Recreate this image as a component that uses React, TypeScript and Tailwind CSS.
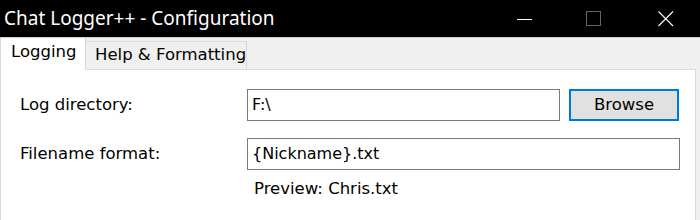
import React from "react";

const uiFont = { fontFamily: "Tahoma, 'DejaVu Sans', sans-serif" };

const TitleBar = () => (
  <div className="flex h-[38px] items-center bg-black border-b border-[#cfcfcf] text-white">
    <div
      className="pl-[4px] text-[19px] leading-none"
      style={{ fontFamily: "'Noto Sans', 'Open Sans', sans-serif" }}
    >
      Chat Logger++ - Configuration
    </div>
    <div className="ml-auto flex h-full items-center">
      <svg width="16" height="16" viewBox="0 0 16 16" className="mr-[53px]">
        <line x1="0" y1="8.5" x2="15" y2="8.5" stroke="#fff" strokeWidth="1" />
      </svg>
      <svg width="16" height="16" viewBox="0 0 16 16" className="mr-[56px]">
        <rect x="0.5" y="0.5" width="14" height="14" fill="none" stroke="#666" strokeWidth="1" />
      </svg>
      <svg width="16" height="16" viewBox="0 0 16 16" className="mr-[26px]">
        <path d="M0.5 0.5 L15 15 M15 0.5 L0.5 15" stroke="#fff" strokeWidth="1.1" />
      </svg>
    </div>
  </div>
);

const Tabs = () => (
  <div
    className="flex h-[31px] items-end whitespace-nowrap bg-[#f0f0f0] text-[16.5px] text-black"
    style={uiFont}
  >
    <div className="relative z-10 -mb-px flex h-[32px] w-[86px] shrink-0 items-center border-l border-r border-[#d9d9d9] bg-white pl-[10px] pb-[3px]">
      Logging
    </div>
    <div className="flex h-[28px] w-[161px] shrink-0 items-center border-t border-r border-[#d9d9d9] bg-[#f0f0f0] pl-[9px]">
      Help &amp; Formatting
    </div>
  </div>
);

export default function App() {
  return (
    <div className="h-[220px] w-[700px] overflow-hidden bg-[#f0f0f0]">
      <TitleBar />
      <Tabs />
      <div
        className="h-[160px] w-[696px] border-l border-r border-t border-[#d9d9d9] bg-white pl-[19px] pt-[19px] text-[16.5px] text-black"
        style={uiFont}
      >
        <div className="flex h-[32px] items-center">
          <div className="w-[227px]">Log directory:</div>
          <div className="flex h-full w-[313px] items-center border border-[#7a7a7a] pl-[4px] text-[16px]">
            F:\
          </div>
          <button className="ml-[9px] flex h-full w-[110px] items-center justify-center border-2 border-[#0078d7] bg-[#e1e1e1]">
            Browse
          </button>
        </div>
        <div className="mt-[17px] flex h-[32px] items-center">
          <div className="w-[227px]">Filename format:</div>
          <div className="flex h-full w-[433px] items-center border border-[#7a7a7a] pl-[4px] text-[16px]">
            {"{Nickname}.txt"}
          </div>
        </div>
        <div className="mt-[9px] pl-[234px] leading-[20px]">Preview: Chris.txt</div>
      </div>
    </div>
  );
}
